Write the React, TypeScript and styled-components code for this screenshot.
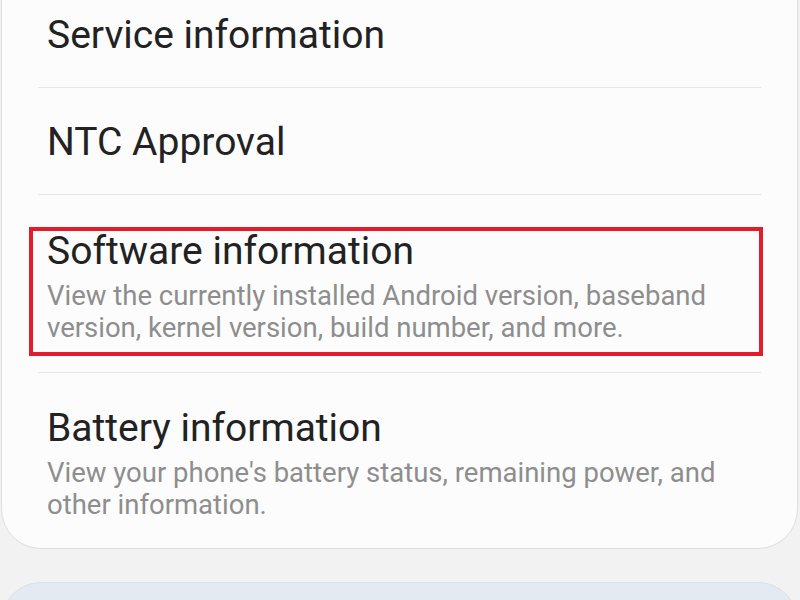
import styled, { createGlobalStyle } from 'styled-components';

const GlobalStyle = createGlobalStyle`
	html, body {
		margin: 0;
		padding: 0;
		background: #f2f2f2;
		overflow: hidden;
	}
	body {
		font-family: Roboto, "Noto Sans", sans-serif;
	}
`;

const Screen = styled.div`
	width: 800px;
	height: 600px;
	overflow: hidden;
	display: flex;
	flex-direction: column;
	gap: 33px;
	padding: 0 2px 0 1px;
	box-sizing: border-box;
`;

const Card = styled.div`
	margin-top: -80px;
	padding-top: 60px;
	background: #fcfcfc;
	border: 1px solid #dedede;
	border-radius: 40px;
	display: flex;
	flex-direction: column;
`;

const NextCard = styled.div`
	height: 120px;
	flex-shrink: 0;
	background: #e4eaf1;
	border: 1px solid #d9e0e8;
	border-radius: 40px;
`;

const Row = styled.div<{ $top: number; $bottom: number; $last?: boolean }>`
	position: relative;
	margin: 0 36px;
	padding: ${p => `${p.$top}px 9px ${p.$bottom}px`};
	border-bottom: ${p => (p.$last ? 'none' : '1px solid #e6e6e6')};
	display: flex;
	flex-direction: column;
	gap: 7px;
`;

const Title = styled.div`
	font-size: 39px;
	line-height: 44px;
	color: #222222;
`;

const Summary = styled.div`
	font-size: 27.5px;
	line-height: 32px;
	color: #8e8e8e;
	padding-right: 20px;
`;

const Highlight = styled.div`
	position: absolute;
	left: -9px;
	right: -2px;
	top: 32px;
	bottom: 16px;
	border: 4px solid #e31b2b;
	pointer-events: none;
`;

const items = [
	{ title: 'Service information', top: 32, bottom: 30 },
	{ title: 'NTC Approval', top: 32, bottom: 30 },
	{
		title: 'Software information',
		summary:
			'View the currently installed Android version, baseband version, kernel version, build number, and more.',
		marked: true,
		top: 34,
		bottom: 28,
	},
	{
		title: 'Battery information',
		summary: "View your phone's battery status, remaining power, and other information.",
		top: 33,
		bottom: 27,
	},
];

export default function App() {
	return (
		<>
			<GlobalStyle />
			<Screen>
				<Card>
					{items.map((item, i) => (
						<Row
							key={item.title}
							$top={item.top}
							$bottom={item.bottom}
							$last={i === items.length - 1}
						>
							<Title>{item.title}</Title>
							{item.summary && <Summary>{item.summary}</Summary>}
							{item.marked && <Highlight />}
						</Row>
					))}
				</Card>
				<NextCard />
			</Screen>
		</>
	);
}
